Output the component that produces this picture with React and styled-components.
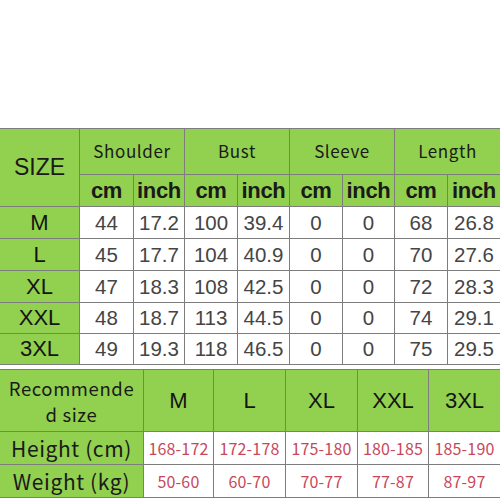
import React from 'react';
import styled, { createGlobalStyle } from 'styled-components';

const Global = createGlobalStyle`
  html, body { margin: 0; padding: 0; background: #fff; }
  body { width: 500px; height: 500px; overflow: hidden; }
`;

const GREEN = '#92d050';
const LINE = '#7d7d7d';

const Page = styled.div`
  width: 500px;
  padding-top: 128px;
  display: flex;
  flex-direction: column;
  gap: 4px;
`;

const Grid = styled.div`
  display: grid;
  grid-template-columns: ${(p) => p.$cols};
  grid-template-rows: ${(p) => p.$rows};
  gap: 1px;
  background: ${LINE};
  border-top: 1px solid ${LINE};
  border-bottom: 1px solid ${LINE};
`;

const Cell = styled.div`
  display: flex;
  align-items: center;
  justify-content: center;
  text-align: center;
  background: ${(p) => (p.$green ? GREEN : '#fff')};
  grid-column: span ${(p) => p.$colSpan || 1};
  grid-row: span ${(p) => p.$rowSpan || 1};
  overflow: hidden;
  white-space: nowrap;
`;

const SizeTitle = styled(Cell)`
  font-family: 'Liberation Sans', Arial, sans-serif;
  font-size: 23px;
  color: #1a1a1a;
`;

const GroupHead = styled(Cell)`
  font-family: 'Noto Sans CJK SC', 'Noto Sans', sans-serif;
  font-size: 17px;
  letter-spacing: 0.6px;
  color: #1a1a1a;
  padding-bottom: 2px;
`;

const UnitHead = styled(Cell)`
  font-family: 'Liberation Sans', Arial, sans-serif;
  font-size: 22px;
  font-weight: bold;
  color: #1a1a1a;
  letter-spacing: -0.3px;
`;

const SizeLabel = styled(Cell)`
  font-family: 'Liberation Sans', Arial, sans-serif;
  font-size: ${(p) => p.$fs || 22}px;
  color: #141414;
`;

const Value = styled(Cell)`
  font-family: 'Liberation Sans', Arial, sans-serif;
  font-size: 20.5px;
  color: #454545;
`;

const RecLabel = styled(Cell)`
  font-family: 'Noto Sans CJK SC', 'Noto Sans', sans-serif;
  font-size: 18.5px;
  line-height: 26px;
  letter-spacing: 0.6px;
  color: #1a1a1a;
  white-space: normal;
`;

const RowLabel = styled(Cell)`
  font-family: 'Noto Sans CJK SC', 'Noto Sans', sans-serif;
  font-size: 21px;
  letter-spacing: 0.6px;
  color: #1a1a1a;
`;

const Range = styled(Cell)`
  font-family: 'Noto Sans CJK SC', 'Noto Sans', sans-serif;
  font-size: 16px;
  letter-spacing: 0.2px;
  color: #c8485a;
`;

const sizes = [
  ['M', '44', '17.2', '100', '39.4', '0', '0', '68', '26.8'],
  ['L', '45', '17.7', '104', '40.9', '0', '0', '70', '27.6'],
  ['XL', '47', '18.3', '108', '42.5', '0', '0', '72', '28.3'],
  ['XXL', '48', '18.7', '113', '44.5', '0', '0', '74', '29.1'],
  ['3XL', '49', '19.3', '118', '46.5', '0', '0', '75', '29.5'],
];

const groups = ['Shoulder', 'Bust', 'Sleeve', 'Length'];

const heights = ['168-172', '172-178', '175-180', '180-185', '185-190'];
const weights = ['50-60', '60-70', '70-77', '77-87', '87-97'];

export default function App() {
  return (
    <>
      <Global />
      <Page>
        <Grid
          $cols="79px 53px 50px 52px 51px 52px 51px 52px 52px"
          $rows="45px 31px 31px 31px 31px 30px 30px"
        >
          <SizeTitle $green $rowSpan={2}>SIZE</SizeTitle>
          {groups.map((g) => (
            <GroupHead key={g} $green $colSpan={2}>{g}</GroupHead>
          ))}
          {groups.map((g) => (
            <React.Fragment key={g + 'u'}>
              <UnitHead $green>cm</UnitHead>
              <UnitHead $green>inch</UnitHead>
            </React.Fragment>
          ))}
          {sizes.map(([label, ...vals]) => (
            <React.Fragment key={label}>
              <SizeLabel $green>{label}</SizeLabel>
              {vals.map((v, i) => (
                <Value key={i}>{v}</Value>
              ))}
            </React.Fragment>
          ))}
        </Grid>
        <Grid $cols="143px 69px 71px 71px 70px 71px" $rows="61px 32px 32px">
          <RecLabel $green>Recommende<br />d size</RecLabel>
          {['M', 'L', 'XL', 'XXL', '3XL'].map((s) => (
            <SizeLabel key={s} $green $fs={22}>{s}</SizeLabel>
          ))}
          <RowLabel $green>Height (cm)</RowLabel>
          {heights.map((h) => (
            <Range key={h}>{h}</Range>
          ))}
          <RowLabel $green>Weight (kg)</RowLabel>
          {weights.map((w) => (
            <Range key={w}>{w}</Range>
          ))}
        </Grid>
      </Page>
    </>
  );
}
